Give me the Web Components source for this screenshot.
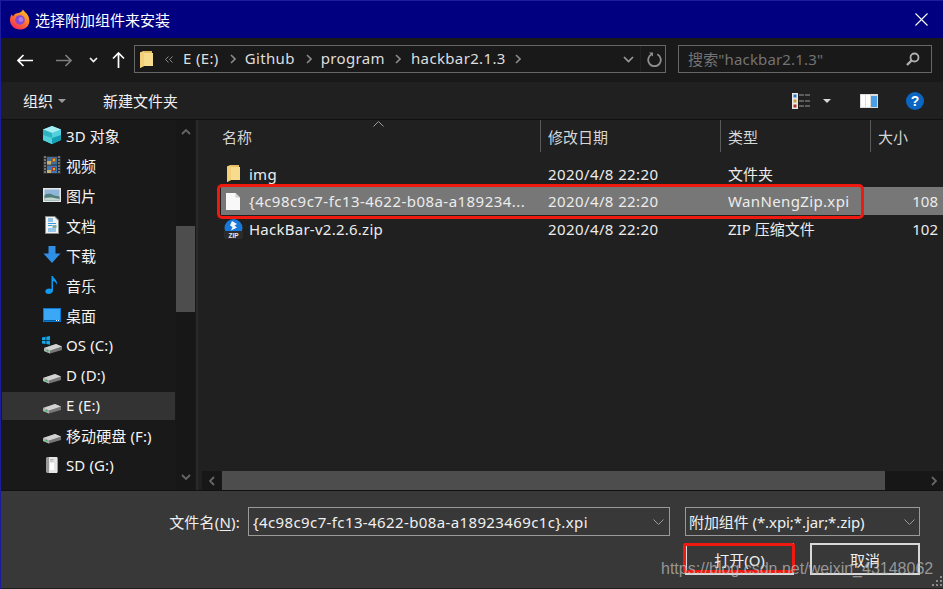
<!DOCTYPE html>
<html lang="zh-CN">
<head>
<meta charset="utf-8">
<title>选择附加组件来安装</title>
<style>
  html, body { margin: 0; padding: 0; background: #202020; }
  body { font: 15px "Noto Sans", "Noto Sans CJK SC", sans-serif; color: #f2f2f2; overflow: hidden; }
</style>
</head>
<body>
<file-dialog>
  <dialog-titlebar slot="title" text="选择附加组件来安装"></dialog-titlebar>
  <nav-bar slot="nav"></nav-bar>
  <command-bar slot="commands"></command-bar>
  <nav-tree slot="tree">
    <tree-item icon="cube" label="3D 对象"></tree-item>
    <tree-item icon="film" label="视频"></tree-item>
    <tree-item icon="picture" label="图片"></tree-item>
    <tree-item icon="doc" label="文档"></tree-item>
    <tree-item icon="down" label="下载"></tree-item>
    <tree-item icon="music" label="音乐"></tree-item>
    <tree-item icon="desktop" label="桌面"></tree-item>
    <tree-item icon="osdrive" label="OS (C:)"></tree-item>
    <tree-item icon="drive" label="D (D:)"></tree-item>
    <tree-item icon="drive" label="E (E:)" selected></tree-item>
    <tree-item icon="drive" label="移动硬盘 (F:)"></tree-item>
    <tree-item icon="sd" label="SD (G:)"></tree-item>
  </nav-tree>
  <file-list slot="files">
    <file-row icon="folder" name="img" date="2020/4/8 22:20" type="文件夹"></file-row>
    <file-row icon="blank" name="{4c98c9c7-fc13-4622-b08a-a189234..." date="2020/4/8 22:20" type="WanNengZip.xpi" size="108" selected></file-row>
    <file-row icon="zip" name="HackBar-v2.2.6.zip" date="2020/4/8 22:20" type="ZIP 压缩文件" size="102"></file-row>
  </file-list>
  <dialog-footer slot="footer"></dialog-footer>
</file-dialog>

<script>
// icon drawings shared by the tree and the file list
const ICONS = {
  cube: `<svg width="18" height="18" viewBox="0 0 18 18"><path d="M9 0 18 3.500V14L9 18 0 14V3.500Z" fill="#4fd0dc"/><path d="M9 0 18 3.500 9 7 0 3.500Z" fill="#a5edf0"/><path d="M9 7V18L0 14V3.500Z" fill="#2fb4c4"/><path d="M9 12 18 9V14L9 18Z" fill="#16a0b4"/><path d="M0 9 9 12V18L0 14Z" fill="#52d0da"/></svg>`,
  film: `<svg width="18" height="18" viewBox="0 0 18 18"><rect width="18" height="18" fill="#2e2e2e"/><path d="M1 1h2M1 4h2M1 7h2M1 10h2M1 13h2M1 16h2M15 1h2M15 4h2M15 7h2M15 10h2M15 13h2M15 16h2" stroke="#8c8c8c" stroke-width="1.400"/><rect x="4" y="1" width="10" height="7.500" fill="#3f6f9c"/><rect x="4" y="9.500" width="10" height="7.500" fill="#3f78b4"/><path d="M4 5h4v3.500H4z" fill="#c8b070"/><path d="M9 2h4v4H9z" fill="#a85a28"/><path d="M10 3h2v2h-2z" fill="#e0b020"/><path d="M4 14h4v3H4z" fill="#c8b070"/><path d="M9 11h4v4H9z" fill="#a83a28"/><path d="M10 12h2v2h-2z" fill="#e0b020"/></svg>`,
  picture: `<svg width="18" height="14" viewBox="0 0 18 14"><rect width="18" height="14" fill="#e8e8e8"/><rect x="1.500" y="1.500" width="15" height="11" fill="#8fb6d8"/><path d="M1.500 7C5 5 8 5.500 11 7.500L16.500 8.500V12.500H1.500Z" fill="#4f7f78"/><path d="M1.500 10C6 9 11 9.500 16.500 11V12.500H1.500Z" fill="#c4d4d0"/></svg>`,
  doc: `<svg width="14" height="18" viewBox="0 0 14 18"><path d="M0 0H10L14 4V18H0Z" fill="#8a8a8a"/><path d="M1 1H9.500L13 4.500V17H1Z" fill="#f4f4f4"/><path d="M3 3H8M3 5H8" stroke="#2a90d8"/><path d="M3 7.500H11M3 9.500H7M3 13H11M3 15H11" stroke="#3a9ae0"/><rect x="7.500" y="9" width="4" height="3" fill="#78b0a8"/></svg>`,
  down: `<svg width="18" height="18" viewBox="0 0 18 18"><path d="M5.500 0H12.500V7.500H17.500L9 17 .5 7.500H5.500Z" fill="#2f8fe6"/></svg>`,
  music: `<svg width="14" height="18" viewBox="0 0 14 18"><path d="M6.500 0H8C8.500 3 13 4 12 9 11.500 7 10 5.500 8 5V14.500C8 16.500 5.800 18 3.500 18 1.500 18 .3 16.900 .3 15.500.3 13.800 2.200 12.500 4.300 12.500 5.200 12.500 5.900 12.700 6.500 13Z" fill="#0f9af0"/></svg>`,
  desktop: `<svg width="18" height="14" viewBox="0 0 18 14"><rect width="18" height="14" fill="#0a78d0"/><rect x="1" y="1" width="16" height="11" fill="#3aa8f4"/><path d="M1 12h16v1H1z" fill="#005a9e"/><path d="M13 12.500h3.500" stroke="#fff" stroke-dasharray="1 1"/></svg>`,
  drive: `<svg width="18" height="18" viewBox="0 0 18 18"><path d="M0 12 12 8 18 10.500V14L6 17.500 0 15Z" fill="#777"/><path d="M0 12 12 8 18 10.500 6 14.500Z" fill="#d2d2d2"/><path d="M0 12 6 14.500V17.500L0 15Z" fill="#b4b4b4"/><rect x="2.500" y="14" width="2" height="1.500" fill="#2fc060"/></svg>`,
  osdrive: `<svg width="20" height="18" viewBox="0 0 20 18"><path d="M2 12 14 8 20 10.500V14L8 17.500 2 15Z" fill="#777"/><path d="M2 12 14 8 20 10.500 8 14.500Z" fill="#d2d2d2"/><path d="M2 12 8 14.500V17.500L2 15Z" fill="#b4b4b4"/><rect x="4.500" y="14" width="2" height="1.500" fill="#2fc060"/><path d="M0 1.500 3.500.8V4H0ZM4.300.7 8 0V4H4.300ZM0 4.800H3.500V8L0 7.500ZM4.300 4.800H8V8.700L4.300 8Z" fill="#10a8e8"/></svg>`,
  sd: `<svg width="12" height="16" viewBox="0 0 12 16"><path d="M1 0H11L12 1V15L11 16H1L0 15V1Z" fill="#9a9a9a"/><path d="M3 0H11V16H3Z" fill="#e6e6e6"/><path d="M4 2.500h3.500M4 4h3.500" stroke="#b8b8b8"/><rect x="4" y="6" width="4" height="7" fill="#fff"/></svg>`,
  folder: `<svg width="13" height="17" viewBox="0 0 13 17"><path d="M0 1.500 4 0H12V15H4L0 17Z" fill="#e7bf62"/><path d="M4 2H13V15H4Z" fill="#f7dc8e"/><path d="M0 1.500 4 0V15L0 17Z" fill="#f2cf78"/></svg>`,
  blank: `<svg width="14" height="17" viewBox="0 0 14 17"><path d="M0 0H9.500L14 4.500V17H0Z" fill="#f8f8f8"/><path d="M9.500 0V4.500H14Z" fill="#cfcfcf"/></svg>`,
  zip: `<svg width="19" height="20" viewBox="0 0 19 20"><circle cx="9.500" cy="9" r="9" fill="#1a78d8"/><path d="M8 2 13 5 10.500 6.500 13 8.500 7 11.500 8.500 8 6 6.500Z" fill="#f2f6fa"/><path d="M0 12H19V18Q19 20 17 20H2Q0 20 0 18Z" fill="#2c2c2c"/><text x="9.500" y="18.500" text-anchor="middle" font-family="Liberation Sans, sans-serif" font-size="6.500" font-weight="700" fill="#e8e8e8">ZIP</text></svg>`
};

class FileDialog extends HTMLElement {
  constructor() {
    super();
    this.attachShadow({ mode: "open" });
    this.shadowRoot.innerHTML = `
      <style>
        :host { display: grid; grid-template-columns: 198px 1fr; grid-template-rows: 38px 44px 38px 370px 98px;
          width: 943px; height: 589px; background: #202020; box-sizing: border-box; border-left: 1px solid #1c1c9c; }
        ::slotted([slot=title]), ::slotted([slot=nav]), ::slotted([slot=commands]), ::slotted([slot=footer]) { grid-column: 1 / 3; }
      </style>
      <slot name="title"></slot>
      <slot name="nav"></slot>
      <slot name="commands"></slot>
      <slot name="tree"></slot>
      <slot name="files"></slot>
      <slot name="footer"></slot>`;
  }
}

class DialogTitlebar extends HTMLElement {
  constructor() {
    super();
    this.attachShadow({ mode: "open" });
    this.shadowRoot.innerHTML = `
      <style>
        :host { display: flex; align-items: center; height: 38px; box-sizing: border-box; padding: 0 15px 1px 9px; gap: 5px;
          background: #000080; border-top: 1px solid #1c1c9c; color: #fff; font-size: 15px; }
        span { flex: 1; }
        svg { display: block; }
      </style>
      <svg width="20" height="21" viewBox="0 0 21 21">
        <defs><linearGradient id="fx" x1="0.800" y1="0" x2="0.200" y2="1"><stop offset="0" stop-color="#ffc22e"/><stop offset=".45" stop-color="#ff7a2a"/><stop offset="1" stop-color="#f0285e"/></linearGradient></defs>
        <path d="M13.500 0C15 2.500 17.500 3.500 19 6.500 21 10 21 15 18 18 15.500 20.500 12.500 21 10.500 21 4.500 21 0 16.500 0 11 0 8.500 .8 6.500 2 5 2.200 6 2.700 6.800 3.300 7.300 4 5.500 5.500 4.500 7 4 9.500 3.500 12.500 3 13.500 0Z" fill="url(#fx)"/>
        <circle cx="10.500" cy="11" r="5" fill="#8a48d0"/><circle cx="11.500" cy="10.500" r="2.500" fill="#b07ae8"/>
      </svg>
      <span>${this.getAttribute("text")}</span>
      <svg width="13" height="13" viewBox="0 0 13 13"><path d="M.5.5l12 12M12.500.5l-12 12" stroke="#fff" stroke-width="1.100"/></svg>`;
  }
}

class NavBar extends HTMLElement {
  constructor() {
    super();
    this.attachShadow({ mode: "open" });
    const sep = `<svg class="sep" width="6" height="10" viewBox="0 0 6 10"><path d="M1 1l4 4-4 4" fill="none" stroke="#8a8a8a" stroke-width="1.600"/></svg>`;
    this.shadowRoot.innerHTML = `
      <style>
        :host { display: flex; align-items: center; height: 44px; box-sizing: border-box; background: #191919; padding: 0 11px 2px 16px; }
        svg { display: block; flex: none; }
        .address, .search { height: 28px; box-sizing: border-box; border: 1px solid #666; display: flex; align-items: center; }
        .address { width: 532px; margin-left: 9px; padding-left: 5px; }
        .crumb { color: #dedede; white-space: nowrap; letter-spacing: .35px; line-height: 24px; margin-top: -2px; }
        .fill { flex: 1; }
        .tools { display: flex; align-items: center; gap: 6px; height: 100%; }
        .divider { width: 1px; height: 100%; background: #222; }
        .search { width: 254px; margin-left: 12px; padding: 0 11px 0 9px; color: #737373; justify-content: space-between; letter-spacing: .15px; }
        .search span { margin-top: -1px; }
        .arrow { margin-top: 2px; }
      </style>
      <svg class="arrow" width="16" height="13" viewBox="0 0 16 13"><path d="M6.500 1 1 6.500 6.500 12M1 6.500H16" fill="none" stroke="#fff" stroke-width="1.700"/></svg>
      <svg class="arrow" style="margin-left:23px" width="16" height="13" viewBox="0 0 16 13"><path d="M9.500 1 15 6.500 9.500 12M15 6.500H0" fill="none" stroke="#7d7d7d" stroke-width="1.700"/></svg>
      <svg class="arrow" style="margin-left:17px" width="9" height="6" viewBox="0 0 9 6"><path d="M1 1l3.500 3.500L8 1" fill="none" stroke="#f2f2f2" stroke-width="1.700"/></svg>
      <svg class="arrow" style="margin-left:14px" width="13" height="16" viewBox="0 0 13 16"><path d="M1 6.500 6.500 1 12 6.500M6.500 1V16" fill="none" stroke="#fff" stroke-width="1.700"/></svg>
      <div class="address">
        <svg width="13" height="17" viewBox="0 0 13 17"><path d="M0 1.500 4 0H12V15H4L0 17Z" fill="#e7bf62"/><path d="M4 2H13V15H4Z" fill="#f7dc8e"/><path d="M0 1.500 4 0V15L0 17Z" fill="#f2cf78"/></svg>
        <svg style="margin-left:12px" width="8" height="7" viewBox="0 0 8 7"><path d="M3.500.5.500 3.500l3 3M7.500.5l-3 3 3 3" fill="none" stroke="#8a8a8a"/></svg>
        <span class="crumb" style="margin-left:10px">E (E:)</span>
        <span style="margin-left:11px;display:flex">${sep}</span>
        <span class="crumb" style="margin-left:9px">Github</span>
        <span style="margin-left:11px;display:flex">${sep}</span>
        <span class="crumb" style="margin-left:9px">program</span>
        <span style="margin-left:10px;display:flex">${sep}</span>
        <span class="crumb" style="margin-left:10px">hackbar2.1.3</span>
        <span style="margin-left:9px;display:flex">${sep}</span>
        <span class="fill"></span>
        <div class="tools">
          <svg width="11" height="7" viewBox="0 0 11 7"><path d="M1 1l4.500 4.500L10 1" fill="none" stroke="#9a9a9a" stroke-width="1.700"/></svg>
          <div class="divider"></div>
          <svg style="margin-right:3px" width="15" height="15" viewBox="0 0 15 15"><path d="M4.700 2.300A6.300 6.300 0 1 0 10.300 2.300" fill="none" stroke="#8f8f8f" stroke-width="1.800"/><path d="M2.500 0H6.500V4Z" fill="#8f8f8f" transform="translate(-.5 .5)"/></svg>
        </div>
      </div>
      <div class="search">
        <span>搜索"hackbar2.1.3"</span>
        <svg width="14" height="14" viewBox="0 0 14 14"><circle cx="8.500" cy="5.500" r="4" fill="none" stroke="#b0b0b0" stroke-width="1.800"/><path d="M5.500 8.500 1 13" stroke="#b0b0b0" stroke-width="2.400"/></svg>
      </div>`;
  }
}

class CommandBar extends HTMLElement {
  constructor() {
    super();
    this.attachShadow({ mode: "open" });
    this.shadowRoot.innerHTML = `
      <style>
        :host { display: flex; align-items: center; height: 38px; box-sizing: border-box; background: #202020; padding: 0 19px 0 22px; border-bottom: 1px solid #111; color: #f0f0f0; }
        svg { display: block; flex: none; }
        .fill { flex: 1; }
      </style>
      <span>组织</span>
      <svg style="margin-left:5px" width="8" height="4" viewBox="0 0 8 4"><path d="M0 0H8L4 4Z" fill="#9a9a9a"/></svg>
      <span style="margin-left:37px">新建文件夹</span>
      <span class="fill"></span>
      <svg width="18" height="16" viewBox="0 0 18 16"><rect width="6" height="16" fill="#e8e8e8"/><rect x="1.500" y="1.500" width="3" height="3" fill="#2a78c8"/><rect x="1.500" y="6.500" width="3" height="3" fill="#c8a030"/><rect x="1.500" y="11.500" width="3" height="3" fill="#b03020"/><path d="M7 2h5M13 2h5M7 8h5M13 8h5M7 13h5M13 13h5" stroke="#9a9a9a"/></svg>
      <svg style="margin-left:13px" width="8" height="4" viewBox="0 0 8 4"><path d="M0 0H8L4 4Z" fill="#d8d8d8"/></svg>
      <svg style="margin-left:29px" width="18" height="14" viewBox="0 0 18 14"><rect width="18" height="14" fill="#dcdcdc"/><rect x="1" y="1" width="4" height="12" fill="#fff"/><rect x="6" y="1" width="4" height="12" fill="#fff"/><rect x="11" y="2" width="6" height="11" fill="#4a9ee6"/></svg>
      <svg style="margin-left:28px" width="18" height="18" viewBox="0 0 18 18"><circle cx="9" cy="9" r="9" fill="#0a66c2"/><text x="9" y="14" text-anchor="middle" font-family="Liberation Sans, sans-serif" font-size="14" font-weight="700" fill="#fff">?</text></svg>`;
  }
}

class NavTree extends HTMLElement {
  constructor() {
    super();
    this.attachShadow({ mode: "open" });
    this.shadowRoot.innerHTML = `
      <style>
        :host { display: flex; background: #191919; height: 370px; border-right: 2px solid #2a2a2a; box-sizing: border-box; width: 197px; overflow: hidden; }
        .rows { width: 173px; margin-left: 1px; display: flex; flex-direction: column; }
        .bar { width: 19px; margin-left: 1px; display: flex; flex-direction: column; align-items: center; background: #171717; }
        .thumb { width: 100%; height: 86px; background: #4d4d4d; margin-top: 91px; }
        svg { display: block; }
      </style>
      <div class="rows"><slot></slot></div>
      <div class="bar">
        <svg style="margin-top:9px" width="10" height="6" viewBox="0 0 10 6"><path d="M1 5l4-4 4 4" fill="none" stroke="#666" stroke-width="1.800"/></svg>
        <div class="thumb"></div>
        <svg style="margin-top:162px" width="10" height="6" viewBox="0 0 10 6"><path d="M1 1l4 4 4-4" fill="none" stroke="#666" stroke-width="1.800"/></svg>
      </div>`;
  }
}

class TreeItem extends HTMLElement {
  constructor() {
    super();
    this.attachShadow({ mode: "open" });
    this.shadowRoot.innerHTML = `
      <style>
        :host { display: flex; align-items: center; height: 30px; box-sizing: border-box; color: #f4f4f4; padding-left: 40px; }
        :host([selected]) { background: #333; border-top: 2px solid #191919; padding-bottom: 2px; }
        .icon { width: 20px; height: 20px; display: flex; align-items: center; justify-content: center; flex: none; }
        span { margin-left: 4px; white-space: nowrap; letter-spacing: .1px; }
      </style>
      <div class="icon">${ICONS[this.getAttribute("icon")]}</div>
      <span>${this.getAttribute("label")}</span>`;
  }
}

class FileList extends HTMLElement {
  constructor() {
    super();
    this.attachShadow({ mode: "open" });
    this.shadowRoot.innerHTML = `
      <style>
        :host { display: flex; flex-direction: column; height: 370px; background: #202020; position: relative; overflow: hidden; }
        .head { display: grid; grid-template-columns: 342px 180px 150px 1fr; height: 32px; color: #d6d6d6; flex: none; }
        .head div { display: flex; align-items: center; padding-left: 7px; border-right: 1px solid #5a5a5a; }
        .head div:first-child { padding-left: 23px; }
        .head div:last-child { border-right: 0; padding-left: 7px; }
        .caret { position: absolute; left: 174px; top: 1px; display: block; }
        .rows { flex: 1; padding-top: 8px; }
        .hbar { height: 19px; display: flex; align-items: center; margin-left: 3px; background: #171717; flex: none; }
        .hbar svg { flex: none; display: block; }
        .btn { width: 20px; height: 100%; display: flex; align-items: center; justify-content: center; }
        .thumb { width: 663px; height: 100%; background: #4d4d4d; }
        .rest { flex: 1; display: flex; align-items: center; justify-content: flex-end; padding-right: 6px; }
      </style>
      <div class="head"><div>名称</div><div>修改日期</div><div>类型</div><div>大小</div></div>
      <svg class="caret" width="11" height="6" viewBox="0 0 11 6"><path d="M.5 5.500l5-5 5 5" fill="none" stroke="#9a9a9a"/></svg>
      <div class="rows"><slot></slot></div>
      <div class="hbar">
        <div class="btn"><svg width="6" height="10" viewBox="0 0 6 10"><path d="M5 1 1 5l4 4" fill="none" stroke="#666" stroke-width="1.800"/></svg></div>
        <div class="thumb"></div>
        <div class="rest"><svg width="6" height="10" viewBox="0 0 6 10"><path d="M1 1l4 4-4 4" fill="none" stroke="#666" stroke-width="1.800"/></svg></div>
      </div>`;
  }
}

class FileRow extends HTMLElement {
  constructor() {
    super();
    this.attachShadow({ mode: "open" });
    const a = (n) => this.getAttribute(n) || "";
    const wide = /^[\x00-\x7f]+$/.test(a("type")) ? "wide" : "";
    this.shadowRoot.innerHTML = `
      <style>
        :host { display: grid; grid-template-columns: 319px 180px 150px 1fr; height: 27px; margin-left: 22px; align-items: center; color: #ececec; position: relative; }
        :host([selected]) { background: #777; height: 28px; }
        .name { display: flex; align-items: center; padding-left: 2px; white-space: nowrap; }
        .icon { width: 20px; display: flex; justify-content: center; flex: none; }
        .name span { margin-left: 6px; letter-spacing: .25px; }
        .wide.name span { letter-spacing: .46px; }
        .cell { padding-left: 8px; white-space: nowrap; }
        .date { letter-spacing: .4px; }
        .wide.cell { letter-spacing: .36px; }
        .size { text-align: right; padding-right: 5px; }
      </style>
      <div class="name ${wide}"><div class="icon">${ICONS[a("icon")]}</div><span>${a("name")}</span></div>
      <div class="cell date">${a("date")}</div>
      <div class="cell ${wide}">${a("type")}</div>
      <div class="size">${a("size")}</div>`;
  }
}

class DialogFooter extends HTMLElement {
  constructor() {
    super();
    this.attachShadow({ mode: "open" });
    const chevron = `<svg width="11" height="6" viewBox="0 0 11 6"><path d="M.5.5l5 5 5-5" fill="none" stroke="#9a9a9a"/></svg>`;
    this.shadowRoot.innerHTML = `
      <style>
        :host { display: flex; flex-direction: column; height: 98px; box-sizing: border-box; background: #383838; border-top: 1px solid #111; padding: 16px 23px 0 0; position: relative; color: #f0f0f0; }
        .line { display: flex; align-items: center; justify-content: flex-end; }
        .field { height: 29px; box-sizing: border-box; border: 1px solid #9a9a9a; display: flex; align-items: center; justify-content: space-between; padding: 0 5px 0 4px; white-space: nowrap; }
        .name { width: 422px; margin-left: 8px; }
        .name span { letter-spacing: .38px; }
        .kind { width: 235px; margin-left: 15px; padding-right: 4px; padding-left: 3px; }
        .kind span { letter-spacing: -.08px; }
        .label { letter-spacing: .2px; }
        u { text-underline-offset: 2px; }
        .actions { margin-top: 7px; gap: 16px; }
        .btn { width: 110px; height: 32px; box-sizing: border-box; border: 2px solid #d8d8d8; display: flex; align-items: center; justify-content: center; }
        .btn.open { width: 109px; }
        .mark { position: absolute; box-sizing: border-box; border: 3px solid #f0190f; border-radius: 3px; left: 682px; top: 52px; width: 112px; height: 30px; }
        .stamp { position: absolute; left: 660px; top: 69px; font: 16px "Liberation Sans", sans-serif; color: rgba(190,190,190,.72); white-space: nowrap; }
        .grip { position: absolute; right: 0; bottom: 0; display: block; }
      </style>
      <div class="line">
        <span class="label">文件名(<u>N</u>):</span>
        <div class="field name"><span>{4c98c9c7-fc13-4622-b08a-a18923469c1c}.xpi</span>${chevron}</div>
        <div class="field kind"><span>附加组件 (*.xpi;*.jar;*.zip)</span>${chevron}</div>
      </div>
      <div class="line actions">
        <div class="btn open">打开(O)</div>
        <div class="btn">取消</div>
      </div>
      <div class="mark"></div>
      <div class="stamp">https://blog.csdn.net/weixin_43148062</div>
      <svg class="grip" width="12" height="12" viewBox="0 0 12 12" fill="#8a8a8a"><path d="M9 0h2v2H9zM5 4h2v2H5zM9 4h2v2H9zM1 8h2v2H1zM5 8h2v2H5zM9 8h2v2H9z"/></svg>`;
  }
}

class RowMark extends HTMLElement {
  constructor() {
    super();
    this.attachShadow({ mode: "open" });
    this.shadowRoot.innerHTML = `
      <style>
        :host { display: block; position: absolute; left: 217px; top: 184px; width: 647px; height: 35px; box-sizing: border-box; border: 3px solid #f0190f; border-radius: 5px; }
      </style>`;
  }
}

customElements.define("file-dialog", FileDialog);
customElements.define("dialog-titlebar", DialogTitlebar);
customElements.define("nav-bar", NavBar);
customElements.define("command-bar", CommandBar);
customElements.define("nav-tree", NavTree);
customElements.define("tree-item", TreeItem);
customElements.define("file-list", FileList);
customElements.define("file-row", FileRow);
customElements.define("dialog-footer", DialogFooter);
customElements.define("row-mark", RowMark);

document.body.appendChild(document.createElement("row-mark"));
</script>
</body>
</html>
